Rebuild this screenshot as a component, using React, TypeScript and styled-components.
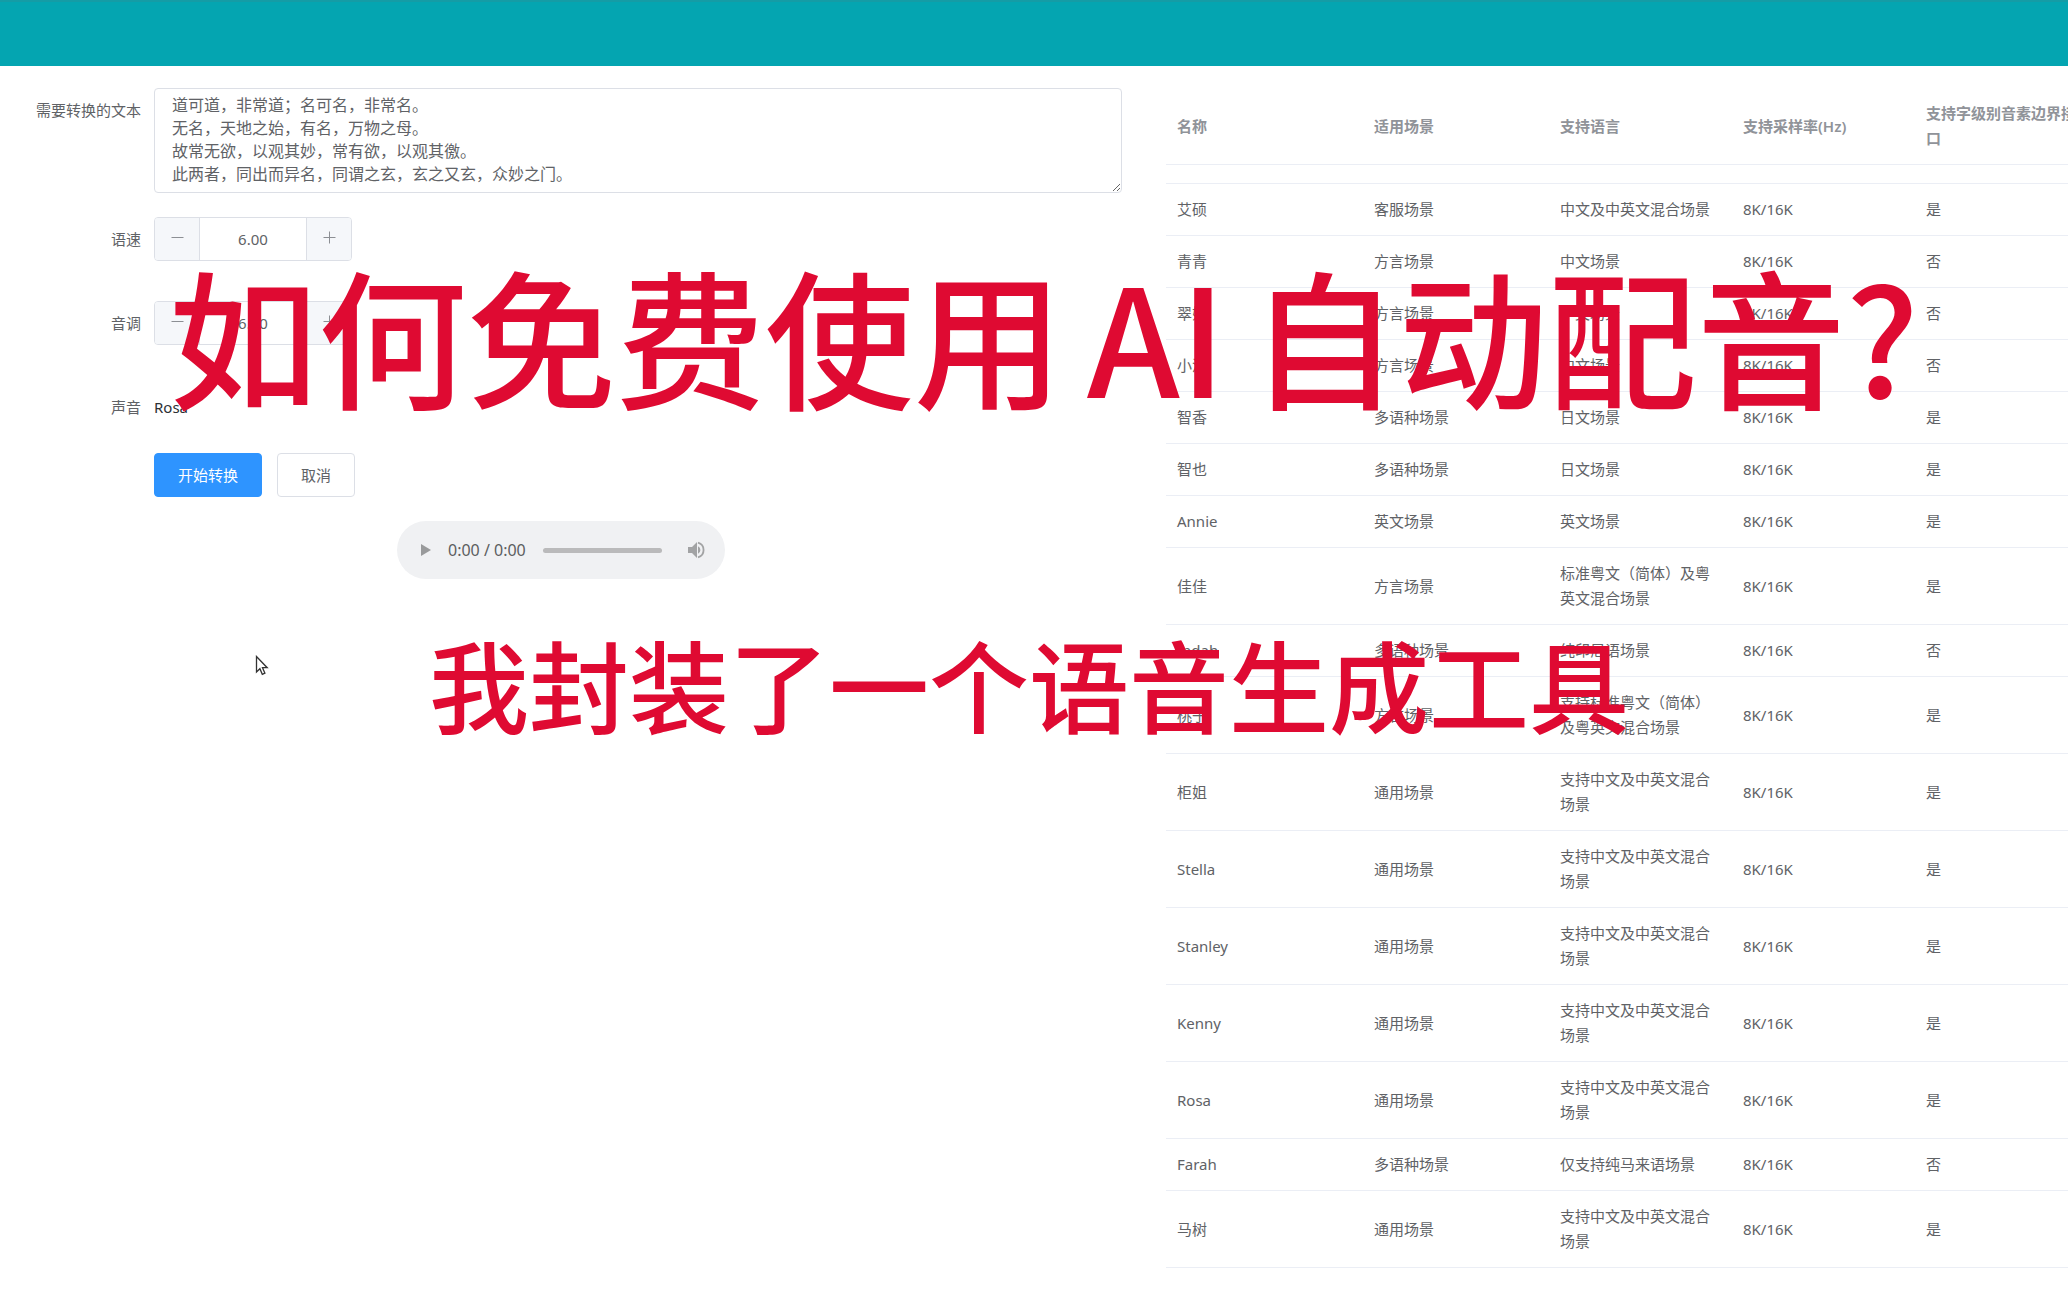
import React, { useState } from 'react';
import styled, { createGlobalStyle } from 'styled-components';

const GlobalStyle = createGlobalStyle`
  *, *::before, *::after { box-sizing: border-box; }
  body {
    margin: 0;
    background: #fff;
    color: #606266;
    font: 15px/25px "Noto Sans", "Noto Sans CJK SC", sans-serif;
  }
  button, input, textarea { font: inherit; color: inherit; }
`;

const Page = styled.div`
  position: relative;
  height: 100vh;
  overflow: hidden;
`;

const TopBar = styled.header`
  height: 66px;
  border-top: 2px solid #149ca6;
  background: #04a5b1;
`;

const Main = styled.main`
  display: grid;
  grid-template-columns: minmax(0, 1122fr) minmax(0, 902fr);
  column-gap: 44px;
  padding-top: 22px;
`;

const Form = styled.form`
  display: flex;
  flex-direction: column;
  gap: 24px;
`;

const Field = styled.div<{ $tall?: boolean }>`
  display: grid;
  grid-template-columns: 141px minmax(0, 1fr);
  column-gap: 13px;
  align-items: start;
  min-height: ${(p) => (p.$tall ? 60 : 44)}px;
`;

const Label = styled.label`
  line-height: 44px;
  text-align: right;
`;

const TextArea = styled.textarea`
  display: block;
  width: 100%;
  height: 105px;
  padding: 5px 17px;
  border: 1px solid #dcdfe6;
  border-radius: 4px;
  outline: none;
  font-size: 16px;
  line-height: 23px;
  resize: vertical;
`;

const Stepper = styled.div`
  display: grid;
  grid-template-columns: 45px 1fr 45px;
  width: 198px;
  height: 44px;
  overflow: hidden;
  border: 1px solid #dcdfe6;
  border-radius: 4px;
`;

const StepButton = styled.button<{ $side: 'left' | 'right' }>`
  display: flex;
  align-items: center;
  justify-content: center;
  padding: 0 0 4px;
  border: 0 solid #dcdfe6;
  border-${(p) => (p.$side === 'left' ? 'right' : 'left')}-width: 1px;
  background: #f5f7fa;
`;

const StepInput = styled.input`
  width: 100%;
  border: 0;
  outline: none;
  background: #fff;
  text-align: center;
`;

const VoiceName = styled.output`
  color: #2c3035;
  line-height: 44px;
`;

const Actions = styled.div`
  display: flex;
  gap: 15px;
  padding-left: 154px;
`;

const Button = styled.button<{ $primary?: boolean }>`
  height: 44px;
  padding: 0 23px;
  border: 1px solid ${(p) => (p.$primary ? '#2e94ff' : '#dcdfe6')};
  border-radius: 4px;
  background: ${(p) => (p.$primary ? '#2e94ff' : '#fff')};
  color: ${(p) => (p.$primary ? '#fff' : '#606266')};
`;

const Player = styled.div`
  display: flex;
  align-items: center;
  align-self: center;
  width: 328px;
  height: 58px;
  padding: 0 19px 0 23px;
  border-radius: 29px;
  background: #f0f1f3;
`;

const PlayerButton = styled.button`
  display: flex;
  padding: 0;
  border: 0;
  background: none;
`;

const Time = styled.span`
  margin: 0 17px 0 16px;
  white-space: nowrap;
  font-size: 16px;
  color: #5c5e60;
`;

const Seek = styled.input`
  flex: 1;
  min-width: 0;
  height: 5px;
  margin: 0 25px 0 0;
  border-radius: 3px;
  background: #bababb;
  appearance: none;
  &::-webkit-slider-thumb { appearance: none; width: 0; height: 0; }
`;

const TablePane = styled.section`
  min-width: 0;
  overflow: hidden;
`;

const Table = styled.table`
  width: 933px;
  border-collapse: separate;
  border-spacing: 0;
  table-layout: fixed;
  th, td {
    padding: 13px 11px;
    border-bottom: 1px solid #ebeef5;
    text-align: left;
    vertical-align: middle;
  }
  th {
    color: #909399;
    font-weight: 600;
  }
`;

const Column = styled.col<{ $width: number }>`
  width: ${(p) => p.$width}px;
`;

const ScrolledRow = styled.tr`
  && td {
    height: 19px;
    padding: 0;
  }
`;

const Title = styled.h1<{ $size: number; $left: number; $top: number }>`
  position: absolute;
  top: ${(p) => p.$top}px;
  left: ${(p) => p.$left}px;
  display: flex;
  gap: 24px;
  margin: 0;
  color: #df0a32;
  font: 500 ${(p) => p.$size}px/${(p) => p.$size}px "Noto Sans CJK SC", sans-serif;
  white-space: nowrap;
  pointer-events: none;
`;

const Cursor = styled.svg`
  position: absolute;
  top: 655px;
  left: 255px;
`;

const defaultText = `道可道，非常道；名可名，非常名。
无名，天地之始，有名，万物之母。
故常无欲，以观其妙，常有欲，以观其徼。
此两者，同出而异名，同谓之玄，玄之又玄，众妙之门。`;

const mixed = '支持中文及中英文混合场景';
const voices: [string, string, string, string][] = [
  ['艾硕', '客服场景', '中文及中英文混合场景', '是'],
  ['青青', '方言场景', '中文场景', '否'],
  ['翠姐', '方言场景', '中文场景', '否'],
  ['小泽', '方言场景', '中文场景', '否'],
  ['智香', '多语种场景', '日文场景', '是'],
  ['智也', '多语种场景', '日文场景', '是'],
  ['Annie', '英文场景', '英文场景', '是'],
  ['佳佳', '方言场景', '标准粤文（简体）及粤英文混合场景', '是'],
  ['Indah', '多语种场景', '纯印尼语场景', '否'],
  ['桃子', '方言场景', '支持标准粤文（简体）及粤英文混合场景', '是'],
  ['柜姐', '通用场景', mixed, '是'],
  ['Stella', '通用场景', mixed, '是'],
  ['Stanley', '通用场景', mixed, '是'],
  ['Kenny', '通用场景', mixed, '是'],
  ['Rosa', '通用场景', mixed, '是'],
  ['Farah', '多语种场景', '仅支持纯马来语场景', '否'],
  ['马树', '通用场景', mixed, '是'],
];

const columns = [
  { name: '名称', width: 197 },
  { name: '适用场景', width: 186 },
  { name: '支持语言', width: 183 },
  { name: '支持采样率(Hz)', width: 183 },
  { name: '支持字级别音素边界接口', width: 184 },
];

function NumberField({ id, label }: { id: string; label: string }) {
  const [value, setValue] = useState(6);
  return (
    <Field $tall>
      <Label htmlFor={id}>{label}</Label>
      <Stepper>
        <StepButton type="button" $side="left" aria-label={`${label} 减少`} onClick={() => setValue(value - 1)}>
          <svg width="13" height="13" viewBox="0 0 13 13" stroke="#8c8f94"><path d="M0.5 6.5h12" /></svg>
        </StepButton>
        <StepInput id={id} value={value.toFixed(2)} onChange={(e) => setValue(Number(e.target.value) || 0)} />
        <StepButton type="button" $side="right" aria-label={`${label} 增加`} onClick={() => setValue(value + 1)}>
          <svg width="13" height="13" viewBox="0 0 13 13" stroke="#8c8f94"><path d="M0.5 6.5h12M6.5 0.5v12" /></svg>
        </StepButton>
      </Stepper>
    </Field>
  );
}

export default function App() {
  return (
    <Page>
      <GlobalStyle />
      <TopBar />
      <Main>
        <Form onSubmit={(e) => e.preventDefault()}>
          <Field>
            <Label htmlFor="text">需要转换的文本</Label>
            <TextArea id="text" defaultValue={defaultText} spellCheck={false} />
          </Field>
          <NumberField id="speed" label="语速" />
          <NumberField id="pitch" label="音调" />
          <Field>
            <Label htmlFor="voice">声音</Label>
            <VoiceName id="voice">Rosa</VoiceName>
          </Field>
          <Actions>
            <Button type="submit" $primary>开始转换</Button>
            <Button type="button">取消</Button>
          </Actions>
          <Player>
            <PlayerButton type="button" aria-label="播放">
              <svg width="12" height="14" viewBox="0 0 12 14" fill="#999a9b"><path d="M1 1v12l10-6z" /></svg>
            </PlayerButton>
            <Time>0:00 / 0:00</Time>
            <Seek type="range" min="0" max="100" defaultValue="0" aria-label="播放进度" />
            <PlayerButton type="button" aria-label="音量">
              <svg width="19" height="18" viewBox="0 0 19 18" fill="#a2a3a4">
                <path d="M1 6v6h4l5 5V1L5 6z" />
                <path d="M11 5.2v7.6a4.2 4.2 0 0 0 0-7.6z" />
                <path d="M11 1.6a7.7 7.7 0 0 1 0 14.8" fill="none" stroke="#a2a3a4" strokeWidth="1.8" />
              </svg>
            </PlayerButton>
          </Player>
        </Form>
        <TablePane>
          <Table>
            <colgroup>
              {columns.map((c) => <Column key={c.name} $width={c.width} />)}
            </colgroup>
            <thead>
              <tr>{columns.map((c) => <th key={c.name} scope="col">{c.name}</th>)}</tr>
            </thead>
            <tbody>
              <ScrolledRow aria-hidden="true"><td colSpan={5} /></ScrolledRow>
              {voices.map(([name, scene, language, boundary]) => (
                <tr key={name}>
                  <td>{name}</td>
                  <td>{scene}</td>
                  <td>{language}</td>
                  <td>8K/16K</td>
                  <td>{boundary}</td>
                </tr>
              ))}
            </tbody>
          </Table>
        </TablePane>
      </Main>
      <Title $size={149} $left={169} $top={259}>
        <span>如何免费使用</span>
        <span>AI</span>
        <span>自动配音?</span>
      </Title>
      <Title as="h2" $size={100} $left={429} $top={633}>
        <span>我封装了一个语音生成工具</span>
      </Title>
      <Cursor width="14" height="21" viewBox="0 0 14 21" fill="#fff" stroke="#333" strokeWidth="1.3" aria-hidden="true">
        <path d="M1.5 1.5v15.5l3.4-3.3 2.4 5.6 2.6-1.1-2.4-5.5h4.7z" />
      </Cursor>
    </Page>
  );
}
